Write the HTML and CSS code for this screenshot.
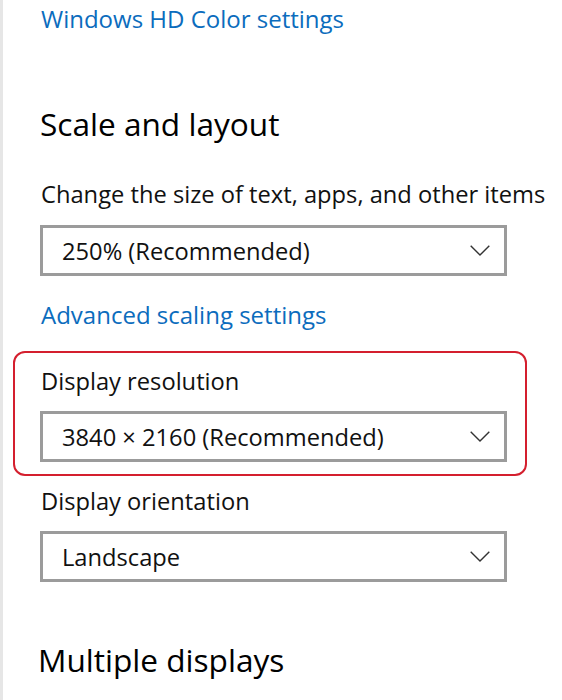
FILE: index.html
```html
<!DOCTYPE html>
<html>
<head>
<meta charset="utf-8">
<link rel="stylesheet" href="styles.css">
</head>
<body>
<div class="page">
  <a class="link link-top">Windows HD Color settings</a>
  <h2 class="heading heading-scale">Scale and layout</h2>
  <div class="label label-first">Change the size of text, apps, and other items</div>
  <div class="select">
    <span class="select-text">250% (Recommended)</span>
    <svg class="chev" width="20" height="11" viewBox="0 0 20 11"><path d="M0.7 0.7 L10 10 L19.3 0.7" fill="none" stroke="#333" stroke-width="1.4"/></svg>
  </div>
  <a class="link link-adv">Advanced scaling settings</a>
  <div class="highlight">
    <div class="label label-res">Display resolution</div>
    <div class="select">
      <span class="select-text">3840 × 2160 (Recommended)</span>
      <svg class="chev" width="20" height="11" viewBox="0 0 20 11"><path d="M0.7 0.7 L10 10 L19.3 0.7" fill="none" stroke="#333" stroke-width="1.4"/></svg>
    </div>
  </div>
  <div class="label label-orient">Display orientation</div>
  <div class="select">
    <span class="select-text">Landscape</span>
    <svg class="chev" width="20" height="11" viewBox="0 0 20 11"><path d="M0.7 0.7 L10 10 L19.3 0.7" fill="none" stroke="#333" stroke-width="1.4"/></svg>
  </div>
  <h2 class="heading heading-multi">Multiple displays</h2>
</div>
</body>
</html>
```
FILE: styles.css
```css
html, body {
  margin: 0;
  padding: 0;
  background: #fff;
}
body {
  font-family: "Open Sans", "Noto Sans", sans-serif;
  color: #111;
  width: 562px;
  height: 700px;
  overflow: hidden;
}
.page {
  border-left: 3px solid #e6e6e6;
  padding-left: 37px;
  min-height: 700px;
  box-sizing: border-box;
  display: flex;
  flex-direction: column;
  align-items: flex-start;
}
.link {
  display: block;
  color: #0b6cbd;
  font-size: 24px;
  line-height: 32px;
  margin-left: 1px;
}
.link-top { margin-top: 3px; }
.link-adv { margin-top: 23px; }
.heading {
  font-weight: 400;
  font-size: 31.6px;
  line-height: 44px;
  margin: 0;
  color: #000;
}
.heading-scale { margin-top: 67px; }
.heading-multi { margin-top: 56px; margin-left: -2px; }
.label {
  font-size: 23.7px;
  line-height: 32px;
  margin-left: 1px;
  color: #111;
}
.label-first { margin-top: 32px; margin-bottom: 15px; }
.label-res { margin-bottom: 14px; }
.label-orient { margin-top: 9px; margin-bottom: 14px; }
.select {
  width: 467px;
  height: 51px;
  box-sizing: border-box;
  border: 3px solid #9b9b9b;
  display: flex;
  align-items: center;
  justify-content: space-between;
  padding: 0 14px 0 19px;
}
.select-text {
  font-size: 23.7px;
  line-height: 32px;
  color: #111;
}
.chev { display: block; }
.highlight {
  margin-top: 20px;
  margin-left: -27px;
  border: 2px solid #d41f2e;
  border-radius: 12px;
  padding: 12px 18px 12px 25px;
}
```
